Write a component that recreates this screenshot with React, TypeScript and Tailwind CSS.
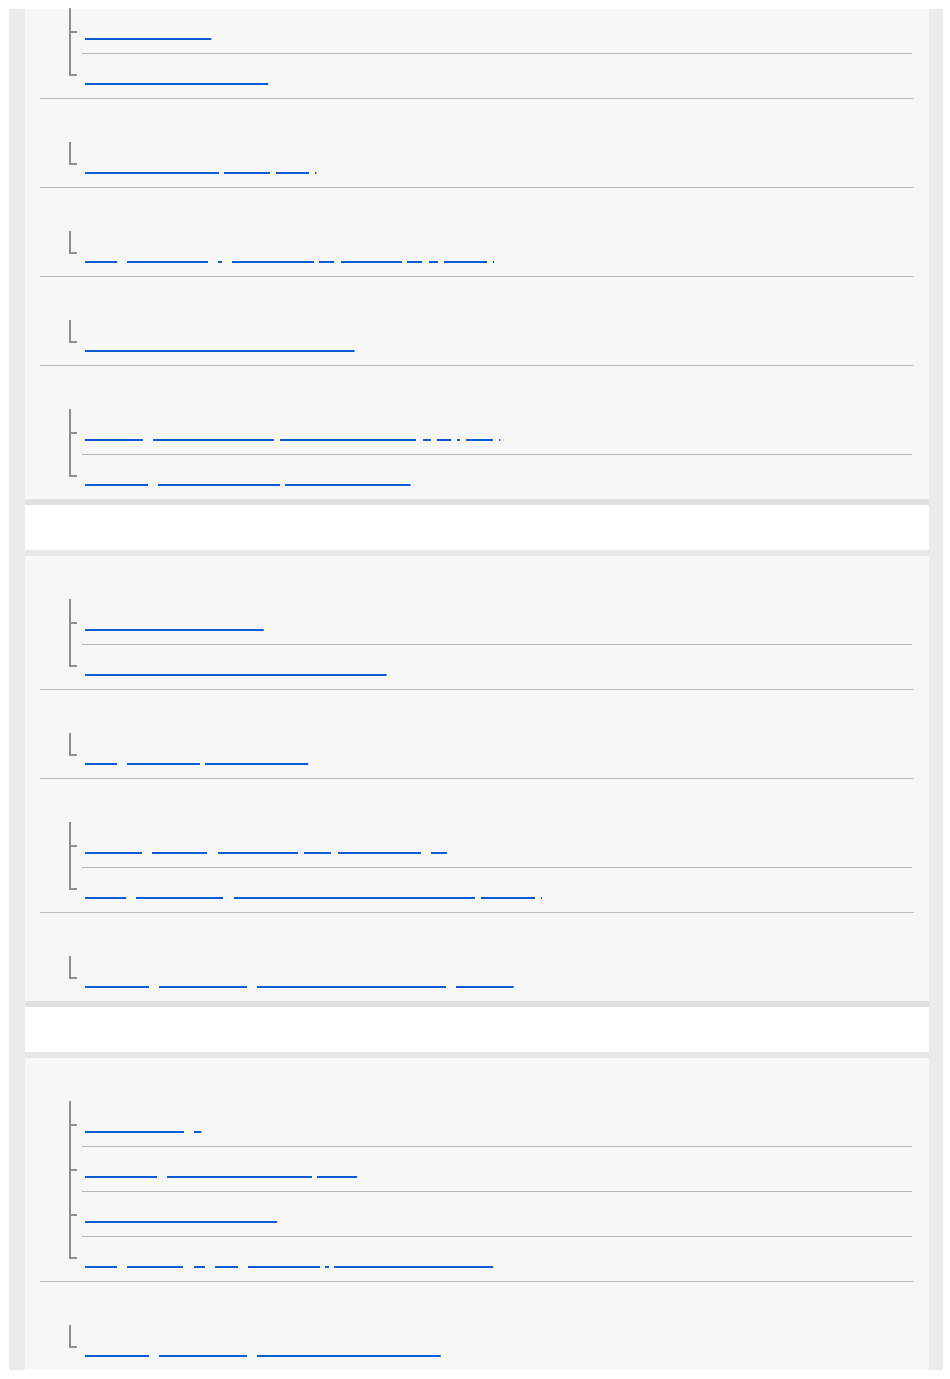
type Group = { header: boolean; items: string[] };
type Panel = { groups: Group[] };

const panels: Panel[] = [
  {
    groups: [
      { header: false, items: ['Remote controller', 'About the remote controls'] },
      { header: true, items: ['Transfer to a smartphone (Wi-Fi)'] },
      { header: true, items: ['Using the shooting guide on the playback display (MENU)'] },
      { header: true, items: ['Notes on the built-in flash and monitor'] },
      {
        header: true,
        items: [
          'Attaching the shoulder strap to the camera body (supplied)',
          'Removing the shoulder strap from the camera',
        ],
      },
    ],
  },
  {
    groups: [
      { header: true, items: ['Monitor screen indicators', 'Icons and indicators on the monitor screen'] },
      { header: true, items: ['Using the touch panel functions'] },
      {
        header: true,
        items: [
          'Selecting the image size and quality for still images',
          'Setting the recording format and frame rate for movies (XAVC S)',
        ],
      },
      { header: true, items: ['Recording movies using the MOVIE button in Intelligent Auto'] },
    ],
  },
  {
    groups: [
      {
        header: true,
        items: [
          'Camera settings',
          'Connecting a camera to a smartphone',
          'Bluetooth remote controller',
          'Using the Imaging Edge Mobile app to control the camera',
        ],
      },
      { header: true, items: ['Recording movies using the MOVIE button in Auto'] },
    ],
  },
];

function TreeItem({ label, last }: { label: string; last: boolean }) {
  return (
    <li className="relative pl-[13px]">
      {last ? (
        <span className="absolute left-0 -top-px h-[23px] w-[8px] border-l-2 border-b-2 border-[#8f8f8f]" />
      ) : (
        <>
          <span className="absolute left-0 -top-px bottom-0 w-[2px] bg-[#8f8f8f]" />
          <span className="absolute left-0 top-[22px] h-[2px] w-[8px] bg-[#8f8f8f]" />
        </>
      )}
      <div
        className={
          'mr-[2px] flex items-center pl-[3px] ' +
          (last ? 'h-[44px]' : 'h-[45px] border-b border-[#b6b6b6]')
        }
      >
        <a
          href="#"
          className="text-[16px] leading-6 text-transparent underline decoration-[#0b5bd3] decoration-[1.5px] underline-offset-[2px]"
        >
          {label}
        </a>
      </div>
    </li>
  );
}

function GroupBlock({ group, last }: { group: Group; last: boolean }) {
  return (
    <div className={'mx-[15px] ' + (last ? '' : 'border-b border-[#bdbdbd]')}>
      {group.header && <div className="h-[44px]" />}
      <ul className="ml-[29px]">
        {group.items.map((item, i) => (
          <TreeItem key={item} label={item} last={i === group.items.length - 1} />
        ))}
      </ul>
    </div>
  );
}

export default function App() {
  return (
    <div className="min-h-screen bg-white pt-[9px] font-['Liberation_Sans',Arial,sans-serif]">
      <div className="ml-[9px] mr-[7px] bg-[#ebebeb] pl-[16px] pr-[14px]">
        {panels.map((panel, p) => (
          <div key={p}>
            {p > 0 && (
              <div className="h-[57px] border-t-[6px] border-b-[6px] border-t-[#e0e0e0] border-b-[#e6e6e6] bg-white">
                <h2 className="px-4 text-transparent">Section</h2>
              </div>
            )}
            <div className="bg-[#f7f7f7]">
              {panel.groups.map((g, i) => (
                <GroupBlock key={i} group={g} last={i === panel.groups.length - 1} />
              ))}
            </div>
          </div>
        ))}
      </div>
    </div>
  );
}
